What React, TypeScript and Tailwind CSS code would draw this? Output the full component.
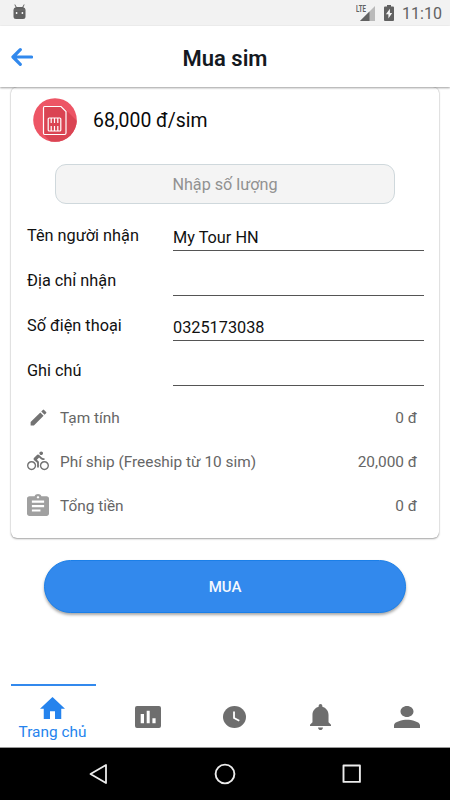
import React from "react";

type IconProps = { box: string; className: string; children: React.ReactNode };

function Icon({ box, className, children }: IconProps) {
  return (
    <svg viewBox={box} preserveAspectRatio="none" fill="currentColor" className={`block shrink-0 ${className}`}>
      {children}
    </svg>
  );
}

function StatusBar() {
  return (
    <div className="flex h-[26px] shrink-0 items-start bg-[#f2f2f2] text-[#616161]">
      <Icon box="0 0 13 16" className="mt-1 ml-[13px] h-4 w-[13px]">
        <path d="M2 .3 3.7 3h5.6L11 .3l.6.4L10.3 3.2Q12.5 4 12.5 6v6.5q0 2.5-2.5 2.5H3Q.5 15 .5 12.5V6q0-2 2.2-2.8L1.4.7z" />
        <path d="M.8 6h11.4" stroke="#777" strokeWidth=".7" />
        <circle cx="3.6" cy="9" r=".9" fill="#fff" />
        <circle cx="9.4" cy="9" r=".9" fill="#fff" />
      </Icon>
      <div className="ml-auto flex items-start">
        <span className="mt-[5px] w-[10px] origin-left scale-x-[.68] text-[9px] leading-[9px] font-bold whitespace-nowrap">LTE</span>
        <Icon box="0 0 15 15" className="mt-[6px] -ml-[6px] h-[15px] w-[15px]">
          <path d="M0 15 15 0v15z" fill="#bababa" />
          <path d="M0 15 9.5 5.5V15z" />
        </Icon>
        <Icon box="0 0 10 16" className="mt-[5px] ml-[9.5px] h-4 w-[10px]">
          <path d="M3 0h4v1.5h2q1 0 1 1V15q0 1-1 1H1q-1 0-1-1V2.500q0-1 1-1h2z" />
          <path d="M5.9 3.8 1.900 9.300h2.500v4.200L8.200 7.900H5.900z" fill="#f5f5f5" />
        </Icon>
        <span className="mt-1 mr-[8px] ml-[7.500px] text-[16px] leading-5 tracking-[.05px]">11:10</span>
      </div>
    </div>
  );
}

function Header() {
  return (
    <header className="relative z-10 grid h-[61px] shrink-0 grid-cols-[44px_1fr_44px] items-center bg-white shadow-[0_1px_2px_rgba(0,0,0,0.38)]">
      <svg viewBox="0 0 22 18" className="ml-[11px] h-[18px] w-[22px]" fill="none" stroke="#3289ed" strokeWidth="3.200" strokeLinecap="round" strokeLinejoin="round">
        <path d="M9.300 1.700 2 9l7.300 7.300M2.500 9h18" />
      </svg>
      <h1 className="pt-[4px] text-center text-[22px] leading-7 font-semibold text-[#15191f]">Mua sim</h1>
    </header>
  );
}

function SimLogo() {
  return (
    <svg viewBox="0 0 44 44" className="h-11 w-11 shrink-0">
      <defs>
        <clipPath id="disc"><circle cx="22" cy="22" r="21.800" /></clipPath>
      </defs>
      <g clipPath="url(#disc)">
        <path d="M0 0h44v44H0z" fill="#ed5565" />
        <path d="m32 11 14 14v21H20l-9-9z" fill="#da4453" />
      </g>
      <path d="M11.500 8.500H28l5 5V35q0 1.500-1.500 1.500h-20Q10.500 36.500 10.500 35V10q0-1.500 1-1.500z" fill="#da4453" stroke="#fff" strokeWidth="1.200" />
      <rect x="15.200" y="20" width="12.600" height="13" rx="1" fill="none" stroke="#fff" strokeWidth="1.200" />
      <path d="M18.200 20v5m3.300-5v5m3.300-5v5M18.200 28v5m3.300-5v5m3.300-5v5" stroke="#fff" strokeWidth="1.200" />
    </svg>
  );
}

const fields = [
  { label: "Tên người nhận", value: "My Tour HN" },
  { label: "Địa chỉ nhận", value: "" },
  { label: "Số điện thoại", value: "0325173038" },
  { label: "Ghi chú", value: "" },
];

const totals = [
  {
    label: "Tạm tính",
    value: "0 đ",
    icon: (
      <Icon box="0 0 24 24" className="ml-[0.500px] h-[21px] w-[21px] text-[#737373]">
        <path d="M3 17.250V21h3.750L17.810 9.940l-3.750-3.750L3 17.250zM20.710 7.040a1 1 0 0 0 0-1.410l-2.340-2.340a1 1 0 0 0-1.410 0l-1.830 1.830 3.750 3.750 1.830-1.830z" />
      </Icon>
    ),
  },
  {
    label: "Phí ship (Freeship từ 10 sim)",
    value: "20,000 đ",
    icon: (
      <Icon box="0 0 24 24" className="h-[22px] w-[22px] text-[#737373]">
        <path d="M15.500 5.500c1.100 0 2-.9 2-2s-.9-2-2-2-2 .9-2 2 .9 2 2 2zM5 12c-2.800 0-5 2.200-5 5s2.200 5 5 5 5-2.200 5-5-2.200-5-5-5zm0 8.500c-1.900 0-3.500-1.600-3.500-3.500s1.600-3.500 3.500-3.500 3.500 1.600 3.500 3.500-1.600 3.500-3.500 3.500zm5.800-10 2.400-2.400.8.8c1.300 1.300 3 2.100 5.100 2.100V9c-1.500 0-2.700-.6-3.600-1.500l-1.900-1.900c-.5-.4-1-.6-1.600-.6s-1.100.2-1.400.6L7.800 8.400c-.4.4-.6.900-.6 1.400 0 .6.200 1.100.6 1.400L11 14v5h2v-6.200l-2.200-2.300zM19 12c-2.800 0-5 2.200-5 5s2.200 5 5 5 5-2.200 5-5-2.200-5-5-5zm0 8.500c-1.900 0-3.500-1.600-3.500-3.500s1.600-3.500 3.500-3.500 3.500 1.600 3.500 3.500-1.600 3.500-3.500 3.500z" />
      </Icon>
    ),
  },
  {
    label: "Tổng tiền",
    value: "0 đ",
    icon: (
      <Icon box="3 1 18 20" className="h-[22px] w-[22px] text-[#a0a0a0]">
        <path d="M19 3h-4.180C14.400 1.840 13.300 1 12 1c-1.300 0-2.400.84-2.820 2H5c-1.100 0-2 .9-2 2v14c0 1.100.9 2 2 2h14c1.100 0 2-.9 2-2V5c0-1.100-.9-2-2-2zm-7 0c.55 0 1 .45 1 1s-.45 1-1 1-1-.45-1-1 .45-1 1-1zm2 14H7v-2h7v2zm3-4H7v-2h10v2zm0-4H7V7h10v2z" />
      </Icon>
    ),
  },
];

function OrderCard() {
  return (
    <section className="mx-[11px] h-[451px] shrink-0 rounded-[6px] bg-white shadow-[0_1px_2px_rgba(0,0,0,0.35),0_0_1px_rgba(0,0,0,0.3)]">
      <div className="flex h-[77px] items-start pt-[11px] pl-[22px]">
        <SimLogo />
        <span className="mt-[9px] ml-[16px] text-[19.400px] leading-7 text-[#0a0a0a]">68,000 đ/sim</span>
      </div>
      <div className="mr-[44px] ml-[44px] flex h-10 items-center justify-center rounded-[11px] border border-[#cfd8dc] bg-[#f4f4f4] pt-[3px] text-[16.200px] text-[#919191]">
        Nhập số lượng
      </div>
      <div className="flex flex-col pt-[2px]">
        {fields.map((f) => (
          <div key={f.label} className="flex h-[45px] pl-4">
            <span className="w-[146px] pt-[18px] text-[16.300px] leading-6 text-[#111]">{f.label}</span>
            <span className="h-[45px] w-[251px] border-b border-[#555] pt-[20px] text-[16.300px] leading-6 text-[#111]">{f.value}</span>
          </div>
        ))}
      </div>
      <div className="flex flex-col pt-[9px]">
        {totals.map((t) => (
          <div key={t.label} className="flex h-11 items-center pr-[22px] pl-4 text-[15.400px] text-[#666]">
            <span className="flex w-[33px]">{t.icon}</span>
            <span className="pt-[3px]">{t.label}</span>
            <span className="ml-auto pt-[3px]">{t.value}</span>
          </div>
        ))}
      </div>
    </section>
  );
}

function TabBar() {
  return (
    <nav className="mx-[11px] grid h-[63px] shrink-0 grid-cols-[85px_86px_86px_86px_1fr] text-[#6e6e6e]">
      <div className="flex flex-col items-center border-t-2 border-[#3289ed] pt-[11px] text-[#2583ed]">
        <Icon box="2 3 20 17" className="-ml-[2px] h-[22px] w-[25px]">
          <path d="M10 20v-6h4v6h5v-8h3L12 3 2 12h3v8z" />
        </Icon>
        <span className="mt-[3px] -ml-[2px] text-[15.400px] leading-5 whitespace-nowrap">Trang chủ</span>
      </div>
      <div className="flex justify-center pt-[22px]">
        <Icon box="0 0 26 22" className="mr-[-18px] h-[22px] w-[26px]">
          <path fillRule="evenodd" d="M2 0h22q2 0 2 2v18q0 2-2 2H2q-2 0-2-2V2Q0 0 2 0zm3.700 8v9.300H9V8zm6-3.200v12.500h3V4.800zm5.700 7.400v5.100h3.200v-5.100z" />
        </Icon>
      </div>
      <div className="flex justify-center pt-[22px]">
        <Icon box="0 0 24 24" className="mr-[-18px] h-[22px] w-[23px]">
          <circle cx="12" cy="12" r="12" />
          <path d="M11.500 6v7l5.500 3" fill="none" stroke="#fff" strokeWidth="1.900" />
        </Icon>
      </div>
      <div className="flex justify-center pt-5">
        <Icon box="3 2 17 20" className="mr-[-18px] h-[26px] w-[21px]">
          <path d="M11.500 22c1.100 0 2-.9 2-2h-4c0 1.100.9 2 2 2zm6.500-6v-5.500c0-3.070-2.130-5.640-5-6.320V3.500c0-.83-.67-1.500-1.500-1.500S10 2.670 10 3.500v.68c-2.870.68-5 3.250-5 6.320V16l-2 2v1h17v-1l-2-2z" />
        </Icon>
      </div>
      <div className="flex justify-center pt-[22px]">
        <Icon box="4 4 16 16" className="mr-[-20px] h-[22px] w-[26px]">
          <path d="M12 12c2.210 0 4-1.790 4-4s-1.790-4-4-4-4 1.790-4 4 1.790 4 4 4zm0 2c-2.670 0-8 1.340-8 4v2h16v-2c0-2.660-5.330-4-8-4z" />
        </Icon>
      </div>
    </nav>
  );
}

function SystemNav() {
  return (
    <div className="flex h-[53px] shrink-0 items-start border-t border-[#999] bg-black pt-[15px] text-[#ececec]">
      <svg viewBox="0 0 20 22" className="ml-[89px] h-[22px] w-5" fill="none" stroke="currentColor" strokeWidth="1.800" strokeLinejoin="round">
        <path d="M17 2v18L1.500 11z" />
      </svg>
      <svg viewBox="0 0 22 22" className="ml-[105px] h-[22px] w-[22px]" fill="none" stroke="currentColor" strokeWidth="1.900">
        <circle cx="11" cy="11" r="9.400" />
      </svg>
      <svg viewBox="0 0 20 20" className="mt-px ml-[106px] h-5 w-5" fill="none" stroke="currentColor" strokeWidth="1.900" strokeLinejoin="round">
        <path d="M1.500 1.500h16.400v16.400H1.500z" />
      </svg>
    </div>
  );
}

export default function App() {
  return (
    <main className="flex h-[800px] w-[450px] flex-col overflow-hidden bg-white font-['Roboto','Noto_Sans',sans-serif]">
      <StatusBar />
      <Header />
      <OrderCard />
      <button className="mt-[22px] mr-[44px] ml-[44px] h-[53px] shrink-0 rounded-[26.500px] border border-[#1b7fe8] bg-[#3289ed] pt-px text-[15px] font-medium text-[#f4f8fe] shadow-[0_2px_3px_rgba(0,0,0,0.35)]">
        MUA
      </button>
      <div className="grow" />
      <TabBar />
      <SystemNav />
    </main>
  );
}
